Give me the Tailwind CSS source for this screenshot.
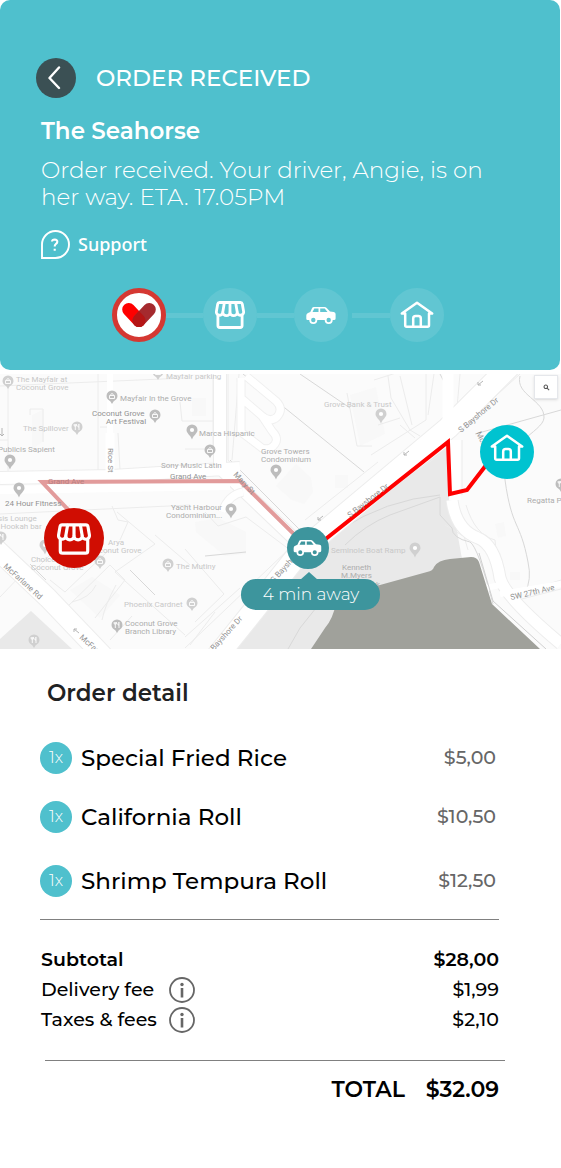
<!DOCTYPE html>
<html lang="en">
<head>
  <meta charset="UTF-8" />
  <meta name="viewport" content="width=device-width, initial-scale=1" />
  <title>Order Received</title>
  <script src="https://cdn.jsdelivr.net/npm/@tailwindcss/browser@4"></script>
</head>
<body class="bg-white text-black font-['Montserrat','Inter',sans-serif]">

  <!-- Shared icons -->
  <svg class="hidden">
    <symbol id="icon-store" viewBox="0 0 30 28">
      <g fill="none" stroke="currentColor" stroke-width="2.8" stroke-linejoin="round" stroke-linecap="round">
        <path d="M4.500 1.500H25.500Q27 1.500 27.300 3L28.600 10.500A3.200 3.200 0 0 1 22.200 11.500A3.600 3.200 0 0 1 15 11.500A3.600 3.200 0 0 1 7.800 11.500A3.200 3.200 0 0 1 1.400 10.500L2.700 3Q3 1.500 4.500 1.500Z" />
        <path d="M9.300 2L7.800 11M15 2V11M20.700 2L22.200 11" />
        <path d="M2.900 14.500V24.500Q2.900 26.500 4.900 26.500H25.100Q27.100 26.500 27.100 24.500V14.500" />
      </g>
    </symbol>
    <symbol id="icon-car" viewBox="0 0 30 17">
      <path fill="currentColor" fill-rule="evenodd" d="M8 0H18.500Q19.800 0 20.700 1L24 4.500L27.800 5Q29.600 5.300 29.600 7V11.500Q29.600 13 28 13H26.700A4 4 0 0 1 18.700 13H11.300A4 4 0 0 1 3.300 13H1.500Q0.300 13 0.300 11.800V8.500Q0.300 6.500 2 6L4.300 5L6 1.300Q6.500 0 8 0ZM8.300 1.500L6.500 5H12.500V1.500ZM14.200 1.500V5H21.500L18.700 1.500ZM7.300 10.800A2.200 2.200 0 1 0 7.300 15.200A2.200 2.200 0 1 0 7.300 10.800ZM22.700 10.800A2.200 2.200 0 1 0 22.700 15.200A2.200 2.200 0 1 0 22.700 10.800Z" />
    </symbol>
    <symbol id="icon-home" viewBox="0 0 34 28">
      <g fill="none" stroke="currentColor" stroke-width="2.500" stroke-linejoin="round" stroke-linecap="round">
        <path d="M5.200 12.500H1.800L17 1.800L32.200 12.500H29V24.300Q29 25.800 27.500 25.800H6.700Q5.200 25.800 5.200 24.300Z" />
        <path d="M13.200 25.500V17.500Q13.200 15 15.700 15H18.300Q20.800 15 20.800 17.500V25.500" />
      </g>
    </symbol>
    <symbol id="icon-info" viewBox="0 0 26 26">
      <circle cx="13" cy="13" r="12" fill="none" stroke="currentColor" stroke-width="1.800" />
      <circle cx="13" cy="7.500" r="1.700" fill="currentColor" />
      <path d="M13 11V20.500" stroke="currentColor" stroke-width="2.600" />
    </symbol>
    <symbol id="pin" viewBox="0 0 12 16">
      <path fill="currentColor" d="M6 0.500A5.500 5.500 0 0 1 11.500 6C11.500 9.500 7.500 11 6 15.500C4.500 11 0.500 9.500 0.500 6A5.500 5.500 0 0 1 6 0.500Z" />
      <circle cx="6" cy="6" r="2.100" fill="#fff" />
    </symbol>
    <symbol id="pin-place" viewBox="0 0 12 16">
      <path fill="currentColor" d="M6 0.500A5.500 5.500 0 0 1 11.500 6C11.500 8.800 9 10.500 7.500 11.500L6 14L4.500 11.500C3 10.500 0.500 8.800 0.500 6A5.500 5.500 0 0 1 6 0.500Z" />
      <path d="M3.500 5.500H8.500V8.500H3.500ZM4.700 5.500V4.500Q6 2.500 7.300 4.500V5.500" fill="none" stroke="#fff" stroke-width="0.900" />
    </symbol>
    <symbol id="pin-food" viewBox="0 0 12 16">
      <path fill="currentColor" d="M6 0.500A5.500 5.500 0 0 1 11.500 6C11.500 8.800 9 10.500 7.500 11.500L6 14L4.500 11.500C3 10.500 0.500 8.800 0.500 6A5.500 5.500 0 0 1 6 0.500Z" />
      <path d="M4.300 3V9M3.200 3V5H5.400V3M8 9V3.200Q6.800 4 7 6H8" fill="none" stroke="#fff" stroke-width="0.900" />
    </symbol>
  </svg>

  <!-- Status header -->
  <header class="bg-[#4fc0cd] text-white rounded-[10px] mr-px pt-[58px] pb-7 px-9">
    <div class="flex items-center gap-5">
      <button type="button" aria-label="Back" class="size-10 rounded-full bg-[#3b5054] flex items-center justify-center">
        <svg class="size-6" viewBox="0 0 24 24" fill="none" stroke="currentColor" stroke-width="2.400" stroke-linecap="round" stroke-linejoin="round"><path d="M15 1.500L5.500 12L15 22" /></svg>
      </button>
      <h1 class="text-[23px] leading-7 font-medium">ORDER RECEIVED</h1>
    </div>

    <div class="pl-[5px]">
      <h2 class="mt-[19px] text-[23px] leading-7 font-semibold">The Seahorse</h2>
      <p class="mt-3 max-w-[460px] text-[23px] leading-[27px] font-light">Order received. Your driver, Angie, is on her way. ETA. 17.05PM</p>
      <a href="#support" class="mt-[19px] inline-flex items-center gap-2 font-['Noto_Sans',sans-serif] text-lg leading-[29px] font-medium align-top">
        <svg class="size-[29px]" viewBox="0 0 29 29" fill="none" stroke="currentColor" stroke-width="1.900">
          <path d="M1 28V14.500A13.500 13.500 0 1 1 14.500 28Z" />
          <path d="M11 11.500Q11.200 9.500 13.700 9.500Q16.400 9.600 16.300 11.900Q16.200 13.300 14.700 14.200Q13.700 15 13.700 16.500M13.700 18.700V20.800" stroke-width="2.100" />
        </svg>
        Support
      </a>
    </div>

    <!-- Progress steps -->
    <div class="mt-[29px] flex items-center justify-center pr-1">
      <div class="size-[54px] rounded-full bg-white border-[5px] border-[#d53832] flex items-center justify-center">
        <svg class="w-[34px] h-6" viewBox="0 0 34 24" fill="none" stroke-width="13" stroke-linecap="round">
          <path d="M6.700 6.500L17 17.500" stroke="#ff0000" />
          <path d="M27.300 6.500L17 17.500" stroke="#a52a2e" />
          <path d="M17 8L21.700 13.100A6.500 6.500 0 1 1 12.300 13.100Z" fill="#b51515" />
        </svg>
      </div>
      <div class="w-[37px] h-[5px] bg-white/10"></div>
      <div class="size-[54px] rounded-full bg-white/10 flex items-center justify-center">
        <svg class="w-[30px] h-7"><use href="#icon-store" /></svg>
      </div>
      <div class="w-[37px] h-[5px] bg-white/10"></div>
      <div class="size-[54px] rounded-full bg-white/10 flex items-center justify-center">
        <svg class="w-[30px] h-[17px]"><use href="#icon-car" /></svg>
      </div>
      <div class="w-[38px] h-[5px] ml-1 bg-white/10"></div>
      <div class="size-[54px] rounded-full bg-white/10 flex items-center justify-center">
        <svg class="w-[34px] h-7"><use href="#icon-home" /></svg>
      </div>
    </div>
  </header>

  <!-- Map -->
  <section class="relative mt-1" aria-label="Driver location">
    <svg class="block w-full h-auto" viewBox="0 374 561 275">
      <rect y="374" width="561" height="275" fill="#fbfbfb" />

      <!-- park, bay and blocks -->
      <path d="M225 649L300 560L448 446L449 500L455 520L464 570L440 649Z" fill="#e9e9e9" />
      <path d="M31 611L0 639V649H72Z" fill="#e9e9e9" />
      <g fill="#f8f8f8">
        <path d="M276 486L296 464L311 478L313 492L304 504L292 500Z" />
        <path d="M195 522L218 518L246 532V554L225 556L196 532Z" />
        <path d="M350 395L376 387L385 434L360 446Z" />
        <path d="M495 524L504 522L506 536L498 538ZM510 572H520V580H510ZM335 475H348V488H335Z" />
        <path d="M70 590L92 577L120 595L100 618Z" />
        <path d="M32 415L44 409V440L32 450ZM192 398H206V416H192Z" />
      </g>

      <!-- property lines -->
      <g fill="none" stroke="#ececec" stroke-width="1">
        <path d="M0 386L185 378M8 386V474M30 415V409H43V442M98 374V472M0 440H8M100 427H108M180 402L182 421H213M185 449H213M213 378V446" />
        <path d="M228 374V460L236 470M239 374L232 460M118 433L120 470M0 514L190 505M0 597L23 573L8 552M70 505L57 520M112 506L118 520L128 522L120 540M30 575L60 545M117 512L155 544L115 572L185 635" />
        <path d="M155 535L190 565M50 580L65 592L110 549M64 610L110 565L125 580L95 618M72 602Q90 598 96 585M102 620Q105 605 116 585M132 616L110 640M185 549L224 594L195 622M185 637L240 588M185 648L290 548M190 645L215 612" />
        <path d="M290 550L246 517L218 526L205 512M240 487L222 512M300 545L270 520L243 480M305 520L378 462M320 535L440 455M374 380L396 373M388 376L391 398L410 430L420 436M400 425L415 438M400 376L412 425M426 374V420L371 455M434 374L428 415" />
        <path d="M460 374L455 430M520 374L455 433M462 440V495M455 505L468 550M466 505Q475 535 495 540L500 590L561 640M445 525L470 540M510 596L561 580M510 602L561 589M347 393L357 446H372M378 425L400 418" />
      </g>
      <g fill="none" stroke="#d8d8d8" stroke-width="1">
        <path d="M243 374L364 472M300 374L350 408M8 475L185 470M230 460L240 470L305 535M130 570L155 595M30 564L46 580M205 556L246 552" />
        <path d="M520 376C515 395 545 400 544 418C543 432 500 445 505 480C512 530 520 520 528 562Q532 580 525 592M475 434L561 410M440 374Q450 390 445 404" />
        <path d="M340 530Q385 500 440 495M345 545Q365 525 390 515L440 497V515L452 528Q452 538 470 542Q478 547 493 604M288 649L300 628L316 608" />
      </g>

      <!-- roads -->
      <g fill="none" stroke="#ededed" stroke-linejoin="round">
        <path d="M210 665L255 609L300 552L448 428L510 366" stroke-width="23" />
        <path d="M0 478L112 476L240 468M220 374V468L308 552" stroke-width="14" />
        <path d="M-8 545L48 598L112 665" stroke-width="21" />
        <path d="M452 500Q456 530 478 538Q495 545 500 578Q505 597 561 644" stroke-width="13" />
      </g>
      <g fill="none" stroke="#fff" stroke-linejoin="round">
        <path d="M210 665L255 609L300 552L448 428L510 366" stroke-width="21" />
        <path d="M0 490L120 488L230 486" stroke-width="8" />
        <path d="M0 478L112 476L240 468M220 374V468L308 552" stroke-width="12" />
        <path d="M110 374V475" stroke-width="6" />
        <path d="M110 433V475" stroke-width="9" />
        <path d="M-8 545L48 598L112 665" stroke-width="19" />
        <path d="M448 374V435M455 440V500" stroke-width="11" />
        <path d="M452 500Q456 530 478 538Q495 545 500 578Q505 597 561 644" stroke-width="11" />
        <path d="M500 594L561 584M486 588L500 585" stroke-width="6" />
      </g>
      <g fill="none" stroke="#f0f0f0" stroke-width="9">
        <path d="M241 378V398L262 416Q270 423 277 417Q284 409 276 401L246 376M241 398V432L262 448Q270 451 275 444Q279 438 272 431L262 416" />
        <path d="M222 512Q228 495 243 492" />
      </g>
      <g fill="none" stroke="#fff" stroke-width="7">
        <path d="M241 378V398L262 416Q270 423 277 417Q284 409 276 401L246 376M241 398V432L262 448Q270 451 275 444Q279 438 272 431L262 416" />
        <path d="M222 512Q228 495 243 492" />
      </g>
      <path d="M311 649L325 628Q333 619 337 600L380 585L427 572Q433 571 434 567Q438 560 450 559L471 557Q477 557 479 562L492 604L540 649Z" fill="#a0a19b" />
      <path d="M479 553L493 601L546 649" fill="none" stroke="#d0d0d0" />

      <!-- routes -->
      <path d="M76 518L42 482L240 481L308 548" fill="none" stroke="#e29b9b" stroke-width="4" />
      <path d="M308 553L448 442L450 494L467 490L490 460" fill="none" stroke="#ff0000" stroke-width="4" />

      <!-- place pins -->
      <g class="text-[#d0d0d0]">
        <use href="#pin-place" x="2" y="375" width="12" height="16" />
        <use href="#pin-place" x="152" y="366" width="12" height="16" />
        <use href="#pin-food" x="71" y="421" width="12" height="16" />
        <use href="#pin" x="375" y="408" width="12" height="16" />
        <use href="#pin-place" x="94" y="555" width="12" height="16" />
        <use href="#pin-place" x="162" y="558" width="12" height="16" />
        <use href="#pin-food" x="28" y="634" width="12" height="16" />
        <use href="#pin-place" x="186" y="597" width="12" height="16" />
        <use href="#pin-food" x="-5" y="531" width="12" height="16" />
        <use href="#pin" x="39" y="539" width="12" height="16" />
        <use href="#pin" x="409" y="542" width="12" height="16" />
      </g>
      <g class="text-[#bdbdbd]">
        <use href="#pin-place" x="106" y="390" width="12" height="16" />
        <use href="#pin-place" x="149" y="409" width="12" height="16" />
        <use href="#pin" x="186" y="424" width="12" height="16" />
        <use href="#pin-place" x="204" y="444" width="12" height="16" />
        <use href="#pin" x="4" y="454" width="12" height="16" />
        <use href="#pin" x="13" y="482" width="12" height="16" />
        <use href="#pin" x="270" y="464" width="12" height="16" />
        <use href="#pin" x="225" y="503" width="12" height="16" />
        <use href="#pin-food" x="111" y="619" width="12" height="16" />
        <use href="#pin-food" x="555" y="478" width="12" height="16" />
      </g>

      <!-- place names -->
      <g class="font-['Roboto',sans-serif] text-[8px]">
        <g fill="#c8c8c8">
          <text x="16" y="382">The Mayfair at</text>
          <text x="16" y="390">Coconut Grove</text>
          <text x="166" y="379">Mayfair parking</text>
          <text x="23" y="431">The Spillover</text>
          <text x="108" y="545">Arya</text>
          <text x="89" y="553">Coconut Grove</text>
          <text x="31" y="562">Choice</text>
          <text x="31" y="570">Coconut Grove</text>
          <text x="176" y="569">The Mutiny</text>
          <text x="124" y="607">Phoenix Cardnet</text>
          <text x="331" y="553">Seminole Boat Ramp</text>
          <text x="-2" y="521">sis Lounge</text>
          <text x="-6" y="529">d Hookah bar</text>
          <text x="324" y="407">Grove Bank &amp; Trust</text>
        </g>
        <g fill="#adadad">
          <text x="120" y="401">Mayfair In the Grove</text>
          <text x="-2" y="452">Publicis Sapient</text>
          <text x="199" y="436">Marca Hispanic</text>
          <text x="161" y="468">Sony Music Latin</text>
          <text x="261" y="454">Grove Towers</text>
          <text x="261" y="462">Condominium</text>
          <text x="171" y="510">Yacht Harbour</text>
          <text x="166" y="518">Condominium...</text>
          <text x="125" y="626">Coconut Grove</text>
          <text x="125" y="634">Branch Library</text>
          <text x="527" y="503">Regatta Park</text>
          <text x="342" y="570">Kenneth</text>
          <text x="341" y="578">M.Myers</text>
          <text x="364" y="587">Park</text>
        </g>
        <g fill="#929292">
          <text x="92" y="416">Coconut Grove</text>
          <text x="106" y="424">Art Festival</text>
          <text x="5" y="506">24 Hour Fitness</text>
          <text x="170" y="479">Grand Ave</text>
          <text x="48" y="484" fill="#b97f7f">Grand Ave</text>
          <text x="108" y="448" transform="rotate(90 108 448)">Rice St</text>
          <text x="233" y="475" transform="rotate(47 233 475)">Mary St</text>
          <text x="461" y="433" transform="rotate(-40 461 433)">S Bayshore Dr</text>
          <text x="350" y="518" transform="rotate(-38 350 518)">S Bayshore Dr</text>
          <text x="274" y="583" transform="rotate(-48 274 583)">S Bayshore Dr</text>
          <text x="214" y="651" transform="rotate(-48 214 651)">Bayshore Dr</text>
          <text x="3" y="567" transform="rotate(42 3 567)">McFarlane Rd</text>
          <text x="79" y="638" transform="rotate(42 79 638)">McFarlane Rd</text>
          <text x="511" y="600" transform="rotate(-13 511 600)">SW 27th Ave</text>
          <text x="476" y="433" transform="rotate(65 476 433)">McDonald</text>
        </g>
      </g>

      <!-- one way arrows -->
      <g fill="none" stroke="#b5b5b5">
        <path d="M483 381L478 385M481 385H478V382M409 451L404 455M407 455H404V452M323 516L318 520M321 520H318V517M79 633L74 629M77 629H74V632M2 428V436M0 434L2 436L4 434" />
      </g>

      <!-- restaurant -->
      <circle cx="74" cy="538" r="30" fill="#d00d02" />
      <use href="#icon-store" x="57" y="523" width="34" height="32" class="text-white" />

      <!-- driver -->
      <circle cx="308" cy="548" r="21" fill="#3d959d" />
      <use href="#icon-car" x="293" y="540" width="29" height="16" class="text-white" />
      <path d="M300 580L309 572L318 580Z" fill="#3d959d" />
      <rect x="241" y="579" width="139" height="31" rx="15" fill="#3d959d" />
      <text x="311" y="600" text-anchor="middle" class="text-[17px] font-light" fill="#fff">4 min away</text>

      <!-- destination -->
      <circle cx="507" cy="452" r="27" fill="#00c3d0" />
      <use href="#icon-home" x="490" y="434" width="34" height="28" class="text-white" />
    </svg>

    <button type="button" aria-label="Search map" class="absolute top-px right-[3px] size-6 bg-white border border-gray-200 shadow-sm flex items-center justify-center">
      <svg class="size-[7px]" viewBox="0 0 8 8" fill="none" stroke="#555" stroke-width="1.200"><circle cx="3.200" cy="3.200" r="2" /><path d="M4.700 4.700L7 7" /></svg>
    </button>
  </section>

  <!-- Order detail -->
  <main class="pt-[30px] pb-16 pl-10 pr-[62px]">
    <h2 class="pl-[7px] text-[23px] leading-7 font-semibold text-[#1f2223]">Order detail</h2>

    <ul class="mt-[35px] pr-[3px] text-[23px] leading-8">
      <li class="flex items-center">
        <span class="size-8 rounded-full bg-[#4fc0cd] text-white text-base leading-8 font-light text-center">1x</span>
        <span class="ml-[9px] flex-1 font-medium">Special Fried Rice</span>
        <span class="text-[19px] font-medium text-[#666]">$5,00</span>
      </li>
      <li class="mt-[27px] flex items-center">
        <span class="size-8 rounded-full bg-[#4fc0cd] text-white text-base leading-8 font-light text-center">1x</span>
        <span class="ml-[9px] flex-1 font-medium">California Roll</span>
        <span class="text-[19px] font-medium text-[#666]">$10,50</span>
      </li>
      <li class="mt-8 flex items-center">
        <span class="size-8 rounded-full bg-[#4fc0cd] text-white text-base leading-8 font-light text-center">1x</span>
        <span class="ml-[9px] flex-1 font-medium">Shrimp Tempura Roll</span>
        <span class="text-[19px] font-medium text-[#666]">$12,50</span>
      </li>
    </ul>

    <hr class="mt-[22px] border-[#808080]" />

    <dl class="mt-[25px] pl-px text-[19px] leading-[30px]">
      <div class="flex justify-between font-semibold">
        <dt>Subtotal</dt>
        <dd>$28,00</dd>
      </div>
      <div class="flex justify-between font-medium">
        <dt class="flex w-[154px] items-center justify-between">Delivery fee
          <button type="button" aria-label="About the delivery fee" class="size-[26px] text-[#666]"><svg class="size-full"><use href="#icon-info" /></svg></button>
        </dt>
        <dd>$1,99</dd>
      </div>
      <div class="flex justify-between font-medium">
        <dt class="flex w-[154px] items-center justify-between">Taxes &amp; fees
          <button type="button" aria-label="About taxes and fees" class="size-[26px] text-[#666]"><svg class="size-full"><use href="#icon-info" /></svg></button>
        </dt>
        <dd>$2,10</dd>
      </div>
    </dl>

    <hr class="mt-[25px] ml-[5px] -mr-[6px] border-[#808080]" />

    <div class="mt-[13px] flex justify-end gap-[21px] text-[22px] leading-8 font-semibold">
      <span>TOTAL</span>
      <span>$32.09</span>
    </div>
  </main>

</body>
</html>
